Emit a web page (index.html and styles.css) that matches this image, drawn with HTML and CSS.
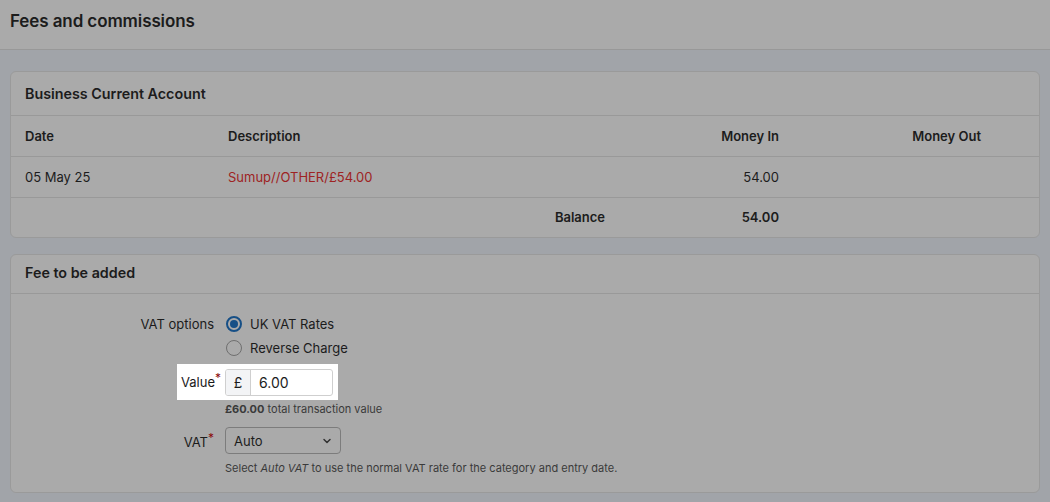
FILE: index.html
```html
<!DOCTYPE html>
<html lang="en">
<head>
    <meta charset="UTF-8">
    <meta name="viewport" content="width=device-width, initial-scale=1.0">
    <title>Fees and commissions</title>
    <link rel="stylesheet" href="styles.css">
</head>
<body>
    <header class="page-header">
        <h1>Fees and commissions</h1>
    </header>

    <main class="page-body">
        <section class="card">
            <div class="card-title">Business Current Account</div>
            <table class="tx-table">
                <colgroup>
                    <col class="c-date">
                    <col class="c-desc">
                    <col class="c-in">
                    <col class="c-out">
                    <col>
                </colgroup>
                <thead>
                    <tr>
                        <th>Date</th>
                        <th>Description</th>
                        <th class="num">Money In</th>
                        <th class="num">Money Out</th>
                        <th></th>
                    </tr>
                </thead>
                <tbody>
                    <tr>
                        <td>05 May 25</td>
                        <td><a href="#" class="tx-link">Sumup//OTHER/£54.00</a></td>
                        <td class="num">54.00</td>
                        <td></td>
                        <td></td>
                    </tr>
                    <tr class="balance-row">
                        <td></td>
                        <td class="balance-label">Balance</td>
                        <td class="num">54.00</td>
                        <td></td>
                        <td></td>
                    </tr>
                </tbody>
            </table>
        </section>

        <section class="card">
            <div class="card-title small">Fee to be added</div>
            <form class="fee-form">
                <div class="form-row radios-row">
                    <span class="form-label">VAT options</span>
                    <div class="radio-group">
                        <label class="radio"><span class="radio-dot checked"></span>UK VAT Rates</label>
                        <label class="radio"><span class="radio-dot"></span>Reverse Charge</label>
                    </div>
                </div>

                <div class="form-row highlight-row">
                    <div class="highlight">
                        <span class="form-label req">Value</span>
                        <div class="money-input">
                            <span class="prefix">£</span>
                            <span class="value">6.00</span>
                        </div>
                    </div>
                </div>
                <div class="form-hint"><b>£60.00</b> total transaction value</div>

                <div class="form-row select-row">
                    <span class="form-label req">VAT</span>
                    <div class="select">
                        <span>Auto</span>
                        <svg width="10" height="10" viewBox="0 0 10 10"><path d="M2 3.5 L5 6.5 L8 3.5" fill="none" stroke="#333" stroke-width="1.5" stroke-linecap="round" stroke-linejoin="round"/></svg>
                    </div>
                </div>
                <div class="form-hint last">Select <i>Auto VAT</i> to use the normal VAT rate for the category and entry date.</div>
            </form>
        </section>
    </main>
</body>
</html>
```

FILE: styles.css
```css
/* reset */
* {
    margin: 0;
    padding: 0;
    box-sizing: border-box;
}

body {
    font-family: "Inter", "Liberation Sans", sans-serif;
    font-size: 13px;
    color: #1c1c1c;
    background: #a1a4a9;
    height: 502px;
    overflow: hidden;
}

/* page header */
.page-header {
    background: #aaaaaa;
    height: 50px;
    border-bottom: 1px solid #989898;
    padding: 11px 10px 0;
}

.page-header h1 {
    font-size: 17px;
    font-weight: 600;
    letter-spacing: -0.1px;
}

.page-body {
    padding: 21px 10px 0;
}

/* cards */
.card {
    background: #aaaaaa;
    border: 1px solid #9a9a9a;
    border-radius: 6px;
    margin-bottom: 16px;
    overflow: hidden;
}

.card-title {
    height: 44px;
    padding: 13px 14px 0;
    font-size: 14.3px;
    font-weight: 600;
    border-bottom: 1px solid #999;
}

.card-title.small {
    height: 39px;
    padding-top: 9px;
}

/* table */
.tx-table {
    width: 100%;
    border-collapse: collapse;
}

.tx-table .c-date { width: 203px; }
.tx-table .c-desc { width: 429px; }
.tx-table .c-in { width: 150px; }
.tx-table .c-out { width: 202px; }

.tx-table th,
.tx-table td {
    text-align: left;
    padding: 0 14px;
    height: 40px;
    vertical-align: middle;
}

.tx-table th {
    font-weight: 600;
    border-bottom: 1px solid #999;
}

.tx-table tbody tr:first-child td {
    height: 41px;
    border-bottom: 1px solid #999;
}

.tx-table .num {
    text-align: right;
}

.tx-link {
    color: #9e2323;
    text-decoration: none;
}

.balance-row td {
    font-weight: 600;
}

.balance-row .balance-label {
    text-align: right;
    padding-right: 38px;
}

/* form */
.fee-form {
    padding: 20px 0 16px;
}

.form-row {
    display: flex;
    align-items: flex-start;
}

.form-label {
    width: 203px;
    text-align: right;
    flex-shrink: 0;
    line-height: 20px;
}

.form-label.req::after {
    content: "*";
    color: #8b0b0b;
    font-size: 12px;
    position: relative;
    top: -5px;
}

.radio-group {
    margin-left: 12px;
    display: flex;
    flex-direction: column;
    gap: 4px;
}

.radio {
    display: flex;
    align-items: center;
    gap: 8px;
    line-height: 20px;
}

.radio-dot {
    width: 16px;
    height: 16px;
    border-radius: 50%;
    border: 1px solid #6f6f6f;
    background: #aaaaaa;
    position: relative;
}

.radio-dot.checked {
    border: 2px solid #164f86;
}

.radio-dot.checked::after {
    content: "";
    position: absolute;
    top: 2px;
    left: 2px;
    width: 8px;
    height: 8px;
    border-radius: 50%;
    background: #164f86;
}

.highlight-row {
    margin-top: 6px;
}

.highlight {
    display: flex;
    align-items: center;
    background: #fff;
    margin-left: 166px;
    padding: 5px 5px 4px 4px;
}

.highlight .form-label {
    width: auto;
    color: #1a1a1a;
}

.money-input {
    display: flex;
    margin-left: 4px;
    width: 108px;
    height: 27px;
    border: 1px solid #cfcfcf;
    border-radius: 3px;
    overflow: hidden;
    font-size: 14px;
}

.money-input .prefix {
    width: 25px;
    background: #f3f4f6;
    border-right: 1px solid #cfcfcf;
    display: flex;
    align-items: center;
    justify-content: center;
}

.money-input .value {
    display: flex;
    align-items: center;
    padding-left: 8px;
}

.form-hint {
    margin-left: 214px;
    font-size: 11px;
    color: #3a3a3a;
    line-height: 16px;
    margin-top: 1px;
}

.form-hint.last {
    margin-top: 2px;
}

.select-row {
    margin-top: 10px;
    align-items: center;
}

.select {
    margin-left: 11px;
    width: 116px;
    height: 27px;
    border: 1px solid #7c7c7c;
    border-radius: 4px;
    display: flex;
    align-items: center;
    justify-content: space-between;
    padding: 0 8px;
    margin-bottom: 4px;
}
```
